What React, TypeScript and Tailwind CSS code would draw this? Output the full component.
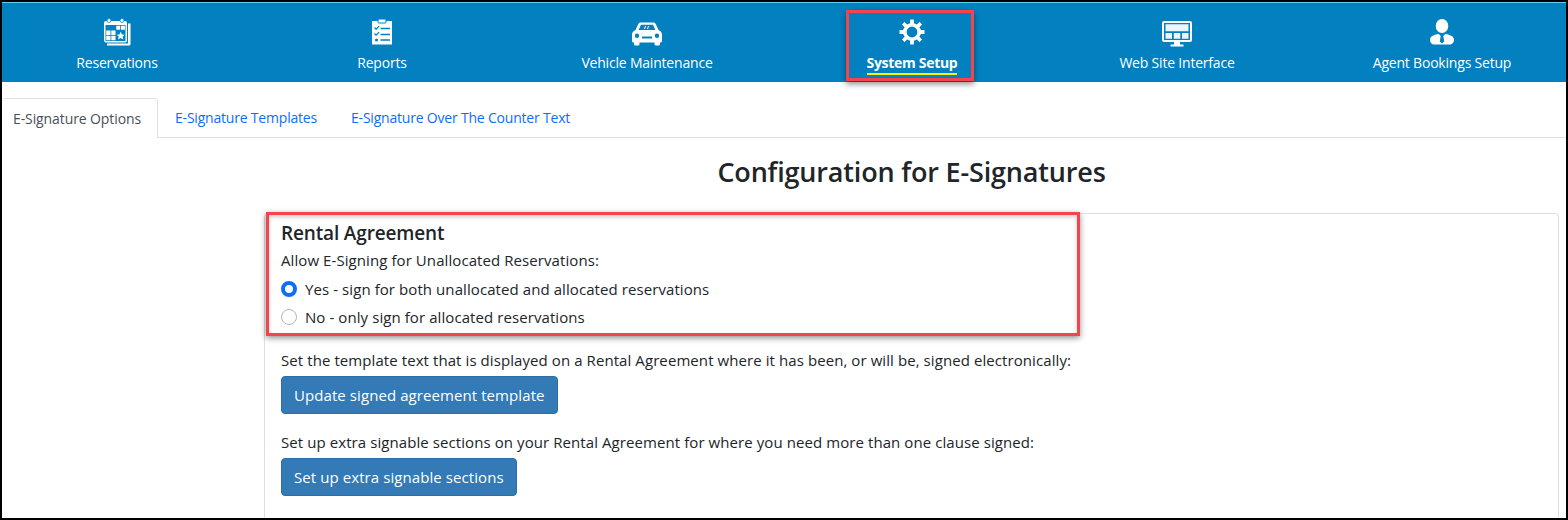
import type { ReactNode } from 'react';

const CalendarIcon = () => (
  <svg width="30" height="30" viewBox="0 0 30 30" fill="none">
    <path d="M26 6.500h2.500v20.500a1.500 1.500 0 0 1-1.500 1.500H5v-2h21z" fill="#fff" />
    <rect x="2" y="4" width="23" height="21.500" rx="2" fill="#fff" />
    <circle cx="7" cy="3.500" r="2" fill="#fff" stroke="#0280c0" strokeWidth="0.800" />
    <circle cx="20" cy="3.500" r="2" fill="#fff" stroke="#0280c0" strokeWidth="0.800" />
    <rect x="3.500" y="8" width="20" height="16" fill="#0280c0" />
    <path d="M14.300 8.800h3.900v4h-3.900zM19 8.800h3.900v4H19zM4.200 13.600h4.300v4.300H4.200zM9.300 13.600h4.200v4.300H9.300zM4.200 18.700h4.300v4.500H4.200zM9.300 18.700h4.200v4.500H9.300z" fill="#fff" />
    <path d="m18.700 14.800 1.300 2.600 2.700.3-2 1.900.6 2.800-2.600-1.400-2.600 1.400.6-2.800-2-1.900 2.700-.3z" fill="#fff" />
  </svg>
);

const ChecklistIcon = () => (
  <svg width="30" height="30" viewBox="0 0 30 30" fill="none">
    <path d="M5 4h20v23.500H5z" fill="#fff" />
    <rect x="11" y="2" width="8" height="4" rx="1" fill="#fff" stroke="#0280c0" strokeWidth="1" />
    <path d="m7.500 10.500 1.600 1.600 3-3M7.500 16.500l1.600 1.600 3-3" stroke="#0280c0" strokeWidth="1.300" />
    <circle cx="9.500" cy="23" r="1.500" fill="#0280c0" />
    <path d="M13.500 11.500H23M13.500 17.500H23M13.500 23H23" stroke="#0280c0" strokeWidth="1.500" />
  </svg>
);

const CarIcon = () => (
  <svg width="32" height="30" viewBox="0 0 32 30" fill="none">
    <path fillRule="evenodd" clipRule="evenodd" d="M9.500 5.500h13c1 0 1.800.6 2.200 1.500L27.500 13c1.800 1 3.500 2.400 3.500 4.500V24a1.500 1.500 0 0 1-1.500 1.500h-.5V27a1.500 1.500 0 0 1-1.500 1.500h-2.500A1.500 1.500 0 0 1 23.500 27v-1.500h-15V27A1.500 1.500 0 0 1 7 28.500H4.500A1.500 1.500 0 0 1 3 27v-1.500h-.5A1.500 1.500 0 0 1 1 24v-6.500C1 15.400 2.700 14 4.500 13l2.800-6C7.700 6.100 8.500 5.500 9.500 5.500zM10 7.800 7.600 13h16.800L22 7.800zM6 16.500a2.200 2.200 0 1 0 0 4.400 2.200 2.200 0 0 0 0-4.400zm20 0a2.200 2.200 0 1 0 0 4.400 2.200 2.200 0 0 0 0-4.400zM11 19.500v2h10v-2z" fill="#fff" />
    <path d="m14.500 9-1 3M17.500 9l-1 3" stroke="#fff" strokeWidth="1" />
  </svg>
);

const GearIcon = () => (
  <svg width="28" height="28" viewBox="0 0 28 28" fill="none">
    <circle cx="14" cy="14" r="7.200" stroke="#fff" strokeWidth="3.600" />
    {[0, 45, 90, 135, 180, 225, 270, 315].map((deg) => (
      <rect key={deg} x="12.100" y="1.500" width="3.800" height="4.500" rx="0.500" fill="#fff" transform={`rotate(${deg} 14 14)`} />
    ))}
  </svg>
);

const MonitorIcon = () => (
  <svg width="32" height="30" viewBox="0 0 32 30" fill="none">
    <rect x="2" y="5" width="28" height="19" rx="1" stroke="#fff" strokeWidth="2" fill="none" />
    <path d="M4.500 7.300h23v7h-23zM4.500 16h6.500v5.800H4.500zM12.800 16h6.500v5.800h-6.500zM21 16h6.500v5.800H21z" fill="#fff" opacity="0.920" />
    <path d="M13 25h6v2.500h-6zM9.500 27.500h13v2h-13z" fill="#fff" />
  </svg>
);

const AgentIcon = () => (
  <svg width="32" height="30" viewBox="0 0 32 30" fill="none">
    <ellipse cx="16" cy="9" rx="6.300" ry="7" fill="#fff" />
    <path d="M12.700 17c-5.700.8-8.700 2.700-8.700 6 0 2 1.500 4.500 4 4.500h16c2.500 0 4-2.500 4-4.500 0-3.300-3-5.200-8.700-6l-2 2 .9 5.500-2.200 2-2.200-2 .9-5.500z" fill="#fff" />
  </svg>
);

const navItems: { label: string; icon: ReactNode; active?: boolean }[] = [
  { label: 'Reservations', icon: <CalendarIcon /> },
  { label: 'Reports', icon: <ChecklistIcon /> },
  { label: 'Vehicle Maintenance', icon: <CarIcon /> },
  { label: 'System Setup', icon: <GearIcon />, active: true },
  { label: 'Web Site Interface', icon: <MonitorIcon /> },
  { label: 'Agent Bookings Setup', icon: <AgentIcon /> },
];

function Radio({ checked, label }: { checked?: boolean; label: string }) {
  return (
    <label className="flex items-center h-[28px]">
      <input
        type="radio"
        readOnly
        checked={!!checked}
        className={`appearance-none w-4 h-4 rounded-full mr-2 bg-white ${checked ? 'border-[4px] border-[#0d6efd]' : 'border border-[#b5b5b5]'}`}
      />
      <span>{label}</span>
    </label>
  );
}

export default function App() {
  return (
    <div className="relative w-[1568px] h-[520px] bg-white border-2 border-black overflow-hidden text-[15px] leading-[22px] text-[#212529] font-['Open_Sans',sans-serif] tracking-[0.08px]">
      <nav className="h-[80px] bg-[#0280c0] border-t border-[#5fd0f5] overflow-hidden">
        <div className="flex w-[1590px] -ml-[17.500px]">
          {navItems.map((item) => (
            <a key={item.label} className="w-[265px] shrink-0 flex flex-col items-center text-white text-[14px] tracking-[-0.2px]">
              <span className="h-[30px] mt-[14px] flex items-center justify-center">{item.icon}</span>
              <span className={`mt-[6px] leading-[20px] ${item.active ? 'font-bold tracking-[-0.3px] border-b-2 border-[#f7f200] h-[22px]' : ''}`}>{item.label}</span>
            </a>
          ))}
        </div>
      </nav>

      <div className="flex h-[40px] mt-[16px] border-b border-[#dee2e6] text-[14px] tracking-[-0.2px]">
        <a className="flex items-center w-[156px] pl-[11px] bg-white border border-b-0 border-[#dee2e6] border-l-0 rounded-t-[4px] h-[40px] text-[#495057] tracking-[-0.1px]">E-Signature Options</a>
        <a className="flex items-center pt-[1px] ml-[17px] text-[#0d6efd]">E-Signature Templates</a>
        <a className="flex items-center pt-[1px] ml-[34px] text-[#0d6efd]">E-Signature Over The Counter Text</a>
      </div>

      <div className="ml-[262px] mr-[7px]">
        <h1 className="text-center text-[27px] leading-[34px] font-semibold mt-[17px] tracking-[-0.17px]">Configuration for E-Signatures</h1>
        <section className="mt-[24px] h-[320px] border border-[#dfdfdf] rounded-[4px] pl-[16px]">
          <h2 className="text-[19px] leading-[24px] font-semibold mt-[7px] tracking-[-0.15px]">Rental Agreement</h2>
          <p className="mt-[4px]">Allow E-Signing for Unallocated Reservations:</p>
          <div className="mt-[4px]">
            <Radio checked label="Yes - sign for both unallocated and allocated reservations" />
            <Radio label="No - only sign for allocated reservations" />
          </div>
          <p className="mt-[18px]">Set the template text that is displayed on a Rental Agreement where it has been, or will be, signed electronically:</p>
          <button className="block mt-[5px] h-[38px] px-[12px] bg-[#337ab7] border border-[#2e6da4] rounded-[4px] text-white text-[15px]">Update signed agreement template</button>
          <p className="mt-[17px]">Set up extra signable sections on your Rental Agreement for where you need more than one clause signed:</p>
          <button className="block mt-[5px] h-[38px] px-[12px] bg-[#337ab7] border border-[#2e6da4] rounded-[4px] text-white text-[15px]">Set up extra signable sections</button>
        </section>
      </div>

      {/* annotation boxes */}
      <div className="absolute left-[844px] top-[8px] w-[128px] h-[71px] border-[3px] border-[#f4444c] shadow-[0_3px_6px_rgba(0,0,0,0.45)]" />
      <div className="absolute left-[264px] top-[210px] w-[814px] h-[124px] border-[3px] border-[#f4444c] shadow-[0_2px_6px_rgba(0,0,0,0.45),inset_0_2px_4px_rgba(0,0,0,0.2)]" />
    </div>
  );
}
